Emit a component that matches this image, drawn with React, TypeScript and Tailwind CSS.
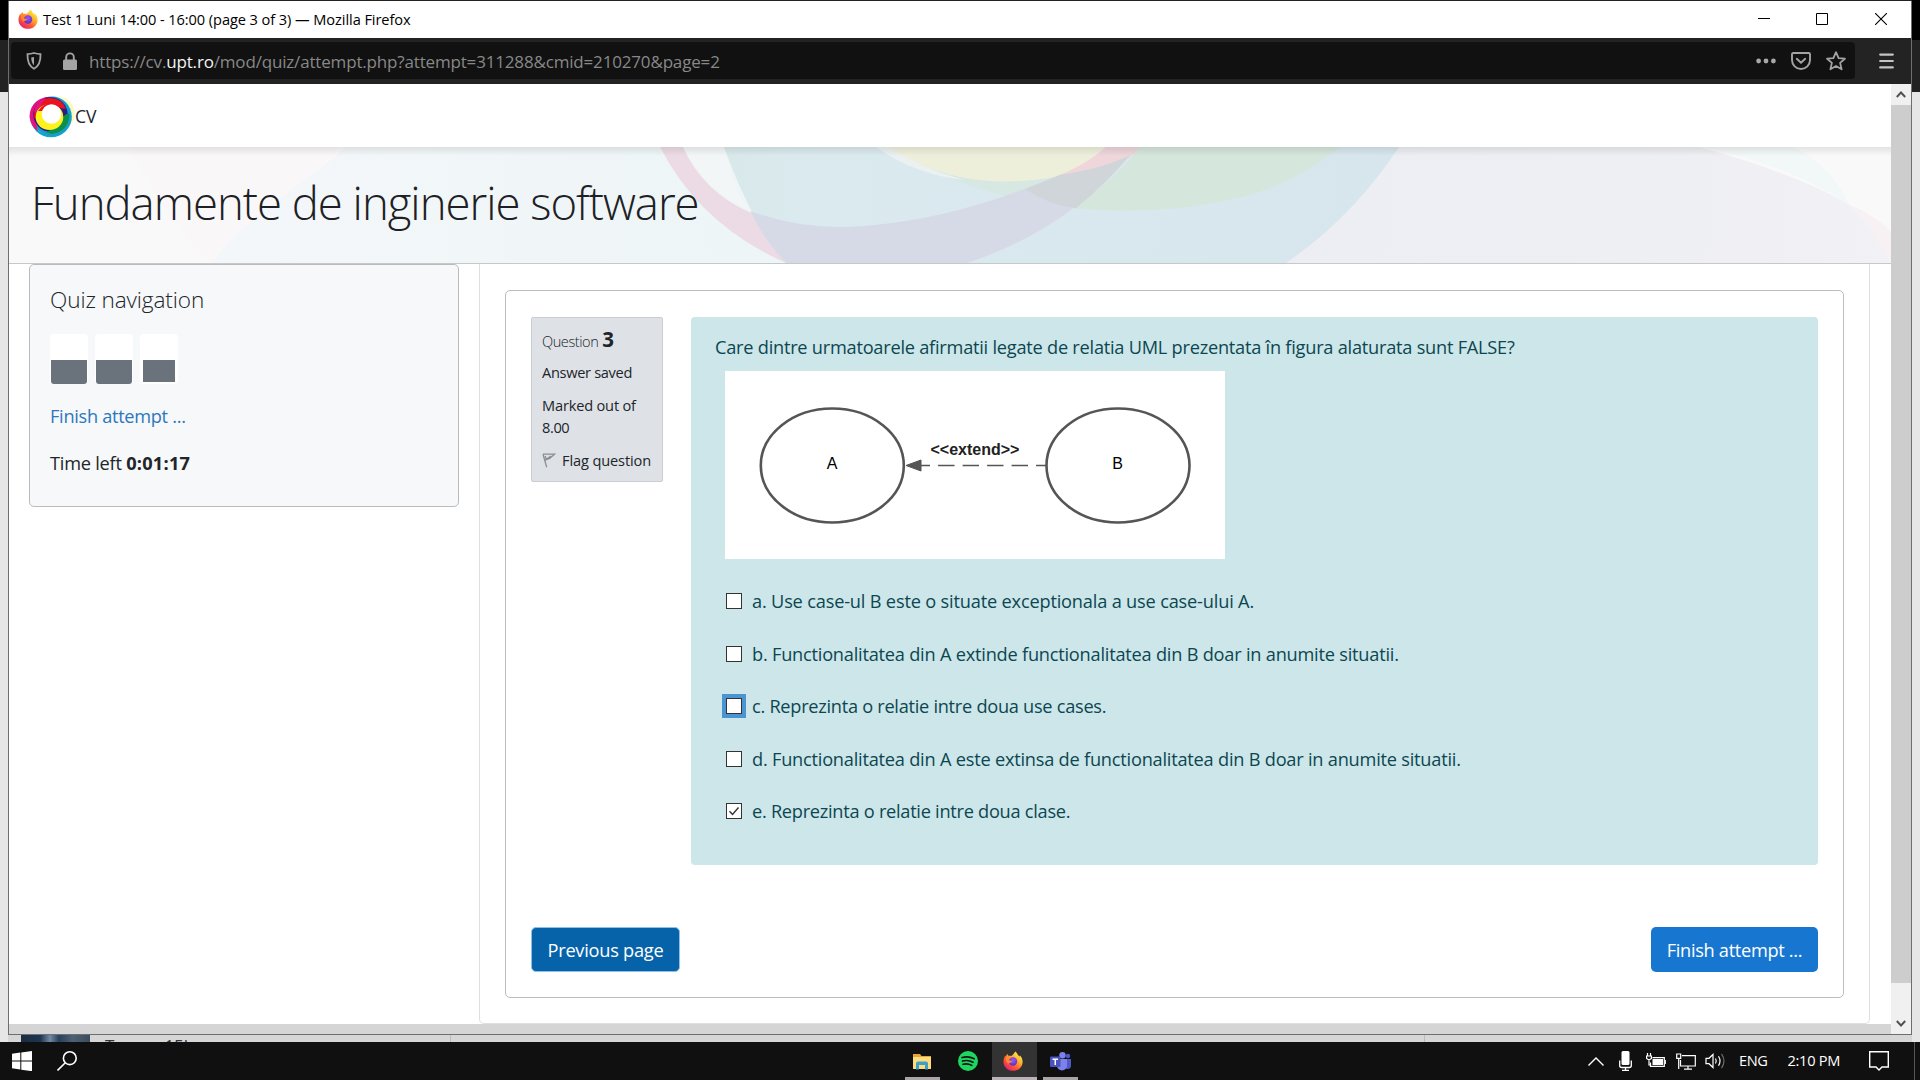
import type { ReactNode } from "react";

const options: { text: string; tracking: string; checked?: boolean; focused?: boolean }[] = [
  { text: "a. Use case-ul B este o situate exceptionala a use case-ului A.", tracking: "tracking-[-0.182px]" },
  { text: "b. Functionalitatea din A extinde functionalitatea din B doar in anumite situatii.", tracking: "tracking-[-0.22px]" },
  { text: "c. Reprezinta o relatie intre doua use cases.", tracking: "tracking-[-0.275px]", focused: true },
  { text: "d. Functionalitatea din A este extinsa de functionalitatea din B doar in anumite situatii.", tracking: "tracking-[-0.22px]" },
  { text: "e. Reprezinta o relatie intre doua clase.", tracking: "tracking-[-0.268px]", checked: true },
];

function FirefoxIcon() {
  return (
    <svg viewBox="0 0 20 20" className="size-5 shrink-0">
      <defs>
        <linearGradient id="fxBody" x1="0.85" y1="0.1" x2="0.2" y2="0.95">
          <stop offset="0" stopColor="#fff04a" />
          <stop offset="0.35" stopColor="#ffae2b" />
          <stop offset="0.65" stopColor="#ff5a37" />
          <stop offset="1" stopColor="#e3206f" />
        </linearGradient>
        <radialGradient id="fxCore" cx="0.5" cy="0.35" r="0.7">
          <stop offset="0" stopColor="#9a59ff" />
          <stop offset="1" stopColor="#5a2bb5" />
        </radialGradient>
      </defs>
      <path
        d="M12.3.4c1.600 1.300 2.300 2.600 2.700 3.900.7.200 1.200.8 1.500 1.500.3-.5.4-1 .4-1.500 1.700 1.700 2.700 4.200 2.700 6.600 0 5-4.200 8.900-9.500 8.900S.5 16 .5 10.900c0-2.300.6-4.600 1.900-6.300.1 0 .2.700.3 1.100.4-1.100 1.200-2 2.200-2.600 0 .7.200 1.300.6 1.800 1-.2 2 0 3 .2 1.300-1.500 2.700-2.900 3.800-4.700Z"
        fill="url(#fxBody)"
      />
      <circle cx="10" cy="10.500" r="4.200" fill="url(#fxCore)" />
      <path d="M3 6.500c1.800-1.200 4-1.200 5.600.2-1 .3-1.300.8-2.600 1.400-.6.400 0 1.200.6 1.400.9.300 2.200.2 2.700.8-.8 1.800-3.300 1.300-4 2.500C3.600 11.400 2.600 9 3 6.500Z" fill="#ff8a2a" />
    </svg>
  );
}

function TitleBar() {
  return (
    <div className="flex h-[37px] shrink-0 items-center bg-white pb-[2px] pl-[9px] text-black">
      <FirefoxIcon />
      <span className="ml-[5px] text-[14.6px] leading-[20px] tracking-[-0.076px]">
        Test 1 Luni 14:00 - 16:00 (page 3 of 3) — Mozilla Firefox
      </span>
      <div className="ml-auto flex items-center pr-[24px]">
        <svg viewBox="0 0 12 12" className="mr-[46px] size-3"><path d="M0 5.500h12" stroke="#000" /></svg>
        <svg viewBox="0 0 12 12" className="mr-[47px] size-3"><path d="M.5.5h11v11H.5Z" fill="none" stroke="#000" /></svg>
        <svg viewBox="0 0 12 12" className="size-3"><path d="M0 0l12 12M12 0L0 12" stroke="#000" strokeWidth="1.100" /></svg>
      </div>
    </div>
  );
}

function Toolbar() {
  return (
    <div className="flex h-[46px] shrink-0 items-start bg-[#232323] pl-[2px] pt-[4px]">
      <div className="flex h-[37px] w-[1844px] items-center rounded-sm bg-[#111111] pl-[15px]">
        <svg viewBox="0 0 16 18" className="h-[18px] w-4 shrink-0" fill="none" stroke="#a3a3a3" strokeWidth="1.800">
          <path d="M8 1c2.200.7 4.400 1.100 6.500 1.200.2 5.500-.6 11.300-6.500 14.600C2.100 13.500 1.300 7.700 1.500 2.200 3.600 2.100 5.800 1.700 8 1Z" />
          <path d="M8 5v8.200C6.300 11.800 5.300 9 5.200 5.500 6.200 5.400 7.200 5.300 8 5Z" fill="#a3a3a3" stroke="none" />
        </svg>
        <svg viewBox="0 0 16 18" className="ml-[20px] h-[18px] w-4 shrink-0">
          <path d="M4.200 8V5.200a3.800 3.800 0 0 1 7.600 0V8" fill="none" stroke="#a3a3a3" strokeWidth="1.900" />
          <rect x="1" y="7.500" width="14" height="10.500" rx="1.500" fill="#a3a3a3" />
        </svg>
        <span className="ml-[11px] whitespace-pre pt-[2px] text-[17px] leading-[24px] tracking-[-0.17px] text-[#888888]">
          https://cv.<span className="text-[#f4f4f4]">upt.ro</span>/mod/quiz/attempt.php?attempt=311288&amp;cmid=210270&amp;page=2
        </span>
        <div className="ml-auto flex items-center pr-[9px]">
          <svg viewBox="0 0 20 6" className="mr-[15px] h-[6px] w-5" fill="#a8a8a8">
            <circle cx="2.600" cy="3" r="2.400" /><circle cx="10" cy="3" r="2.400" /><circle cx="17.400" cy="3" r="2.400" />
          </svg>
          <svg viewBox="0 0 20 18" className="mr-[15px] h-[18px] w-5" fill="none" stroke="#a3a3a3" strokeWidth="1.900" strokeLinecap="round" strokeLinejoin="round">
            <path d="M2.200 1h15.600c.8 0 1.200.5 1.200 1.200V8a9 9 0 0 1-18 0V2.200C1 1.500 1.400 1 2.200 1Z" />
            <path d="M5.800 6.800L10 10.800l4.200-4" />
          </svg>
          <svg viewBox="0 0 20 20" className="size-5" fill="none" stroke="#a3a3a3" strokeWidth="1.800" strokeLinejoin="round">
            <path d="M10 1.200l2.600 5.900 6.300.6-4.800 4.200 1.500 6.400L10 14.900l-5.600 3.400 1.500-6.400L1.100 7.700l6.300-.6Z" />
          </svg>
        </div>
      </div>
      <svg viewBox="0 0 15 16" className="ml-[24px] mt-[11px] h-4 w-[15px]" stroke="#c4c4c4" strokeWidth="2.200" strokeLinecap="round">
        <path d="M1.200 1.600h12.600M1.200 8h12.600M1.200 14.400h12.600" />
      </svg>
    </div>
  );
}

function SiteLogo() {
  return (
    <svg viewBox="28 92 48 46" className="h-[46px] w-12 shrink-0">
      <circle cx="57" cy="112.500" r="17.500" fill="#fdf9b4" />
      <circle cx="51" cy="115.500" r="20.800" fill="#12a3cf" />
      <circle cx="51.500" cy="114" r="20" fill="#fff" />
      <circle cx="52" cy="115.200" r="19.600" fill="#149fc9" />
      <path d="M46 96Q30 100 29.500 116Q31 126 38 130Q34 118 38 108Q42 100 52 96Z" fill="#e6127f" />
      <circle cx="50.500" cy="113.500" r="17.200" fill="#2a1d86" />
      <path d="M52 133Q69 130 69.500 113Q65 111 60 121Q55 128 46 131Z" fill="#0b8f4b" />
      <path d="M34 116Q34 98 50 97Q62 97 66 108L52 104L38 122Z" fill="#e8141f" />
      <path d="M34 110Q36 99 46 97Q40 103 37 114Z" fill="#e6127f" />
      <ellipse cx="49.500" cy="116" rx="13.800" ry="13" fill="#fdf21c" />
      <path d="M38 110Q44 101 54 101.500Q61 102 64 108L54 105L42 110Z" fill="#e8141f" />
      <circle cx="51.500" cy="113" r="9.800" fill="#fff" />
    </svg>
  );
}

function BannerArt() {
  return (
    <svg viewBox="9 147 1882 116" preserveAspectRatio="none" className="absolute inset-0 size-full">
      <defs>
        <linearGradient id="topShade" x1="0" y1="0" x2="0" y2="1">
          <stop offset="0" stopColor="#000" stopOpacity="0.09" />
          <stop offset="1" stopColor="#000" stopOpacity="0" />
        </linearGradient>
        <linearGradient id="leftTint" x1="0" y1="0" x2="1" y2="0">
          <stop offset="0" stopColor="#f4f7f9" />
          <stop offset="1" stopColor="#edf5f6" />
        </linearGradient>
        <linearGradient id="rightTint" x1="0" y1="0" x2="1" y2="0">
          <stop offset="0" stopColor="#edeef3" />
          <stop offset="0.6" stopColor="#eeeff3" />
          <stop offset="1" stopColor="#f2f1f5" />
        </linearGradient>
        <linearGradient id="teal" x1="0" y1="0" x2="1" y2="0">
          <stop offset="0" stopColor="#d9e9ea" />
          <stop offset="0.15" stopColor="#dbeaef" />
          <stop offset="1" stopColor="#d7e5ed" />
        </linearGradient>
      </defs>
      <rect x="9" y="147" width="1882" height="116" fill="#f9f9fa" />
      <path d="M130 147C150 190 175 230 212 263H240L300 190L340 147Z" fill="#faf7f9" />
      <path d="M345 147C318 175 245 215 212 263H800V147Z" fill="url(#leftTint)" />
      <path d="M683 147H724Q732 185 749 210Q705 190 683 147Z" fill="#f3f6f7" />
      <path d="M1380 147H1700Q1800 175 1850 205Q1875 230 1891 263H1270Z" fill="url(#rightTint)" />
      <path d="M1700 147H1794Q1830 165 1850 205Q1790 165 1700 147Z" fill="#f2f7f8" />
      <path d="M1850 205Q1875 215 1891 232V263Q1875 230 1850 205Z" fill="#f7f1f3" />
      <path d="M724 147H1399Q1352 218 1286 263H786Q750 220 724 147Z" fill="url(#teal)" />
      <path d="M876 147H890Q950 175 1010 181L1060 176L1008 197Q945 180 876 147Z" fill="#d7e8e2" />
      <path d="M876 147H892Q920 168 965 180Q915 175 876 147Z" fill="#eaf1f0" />
      <path d="M888 147H1106Q1090 165 1059 176Q985 190 930 168Q905 158 888 147Z" fill="#eeefdb" />
      <path d="M1140 147H1340Q1300 180 1250 195Q1165 217 1070 208Q1110 185 1140 147Z" fill="#d5e6dc" />
      <path d="M660 147H683Q703 192 751 213Q762 235 786 263Q700 225 660 147Z" fill="#ecdbe4" />
      <path d="M750 211Q796 228 845 227Q922 224 1002 197L1060 176Q1095 172 1128 158Q1062 232 967 263H786Q764 240 750 211Z" fill="#d6dae6" />
      <path d="M1106 147H1140Q1132 159 1112 165Q1080 178 1052 178Q1085 166 1106 147Z" fill="#eed6db" />
      <path d="M1025 189L1060 175Q1105 168 1130 155Q1105 185 1076 208Q1048 205 1025 189Z" fill="#cfd5d9" />
      <rect x="9" y="147" width="1882" height="9" fill="url(#topShade)" />
    </svg>
  );
}

function NavSquare({ children }: { children: ReactNode }) {
  return <div className="flex h-[50px] w-[38px] flex-col items-center justify-end rounded-[4px] bg-white">{children}</div>;
}

function QuizNavigation() {
  return (
    <aside className="flex h-[243px] w-[430px] flex-col items-start rounded-[5px] border border-[#b9bbbe] bg-[#f6f8fa] pl-5 text-[#212529]">
      <h2 className="mt-[19px] text-[22.6px] font-light leading-[32px] tracking-[-0.11px]">Quiz navigation</h2>
      <div className="mt-[18px] flex gap-[7px]">
        <NavSquare><div className="h-6 w-9 rounded-b-[3px] bg-[#6a737b]" /></NavSquare>
        <NavSquare><div className="h-6 w-9 rounded-b-[3px] bg-[#6a737b]" /></NavSquare>
        <NavSquare><div className="mb-[2px] h-[22px] w-8 bg-[#6a737b]" /></NavSquare>
      </div>
      <a className="mt-[18px] text-[18.2px] leading-[28px] tracking-[-0.3px] text-[#2c77bd]">Finish attempt ...</a>
      <p className="mt-[19px] text-[18.2px] leading-[28px] tracking-[-0.24px]">
        Time left <span className="font-bold tracking-[0.25px]">0:01:17</span>
      </p>
    </aside>
  );
}

function QuestionInfo() {
  return (
    <div className="flex h-[165px] w-[132px] flex-col items-start rounded-[2px] border border-[#c9cdd2] bg-[#dee2e6] pl-[10px] text-[14.6px] leading-[22px] text-[#212529]">
      <div className="mt-[9px] flex h-[24px] items-baseline">
        <span className="text-[14.6px] font-light tracking-[-0.45px]">Question</span>
        <span className="ml-[4px] text-[20.500px] font-bold leading-[24px]">3</span>
      </div>
      <div className="mt-[10px] tracking-[-0.32px]">Answer saved</div>
      <div className="mt-[11px] tracking-[-0.18px]">Marked out of</div>
      <div className="tracking-[-0.4px]">8.00</div>
      <div className="mt-[11px] flex items-center whitespace-nowrap tracking-[-0.13px]">
        <svg viewBox="0 0 14 15" className="mr-[6px] h-[15px] w-[14px]" fill="none" stroke="#8b8f93" strokeWidth="1.300">
          <path d="M1 1.200h11.500L8 5.200 2.700 7.300M1 1.200l3.700 13M3.200 3l1 3.200L9 3" />
        </svg>
        Flag question
      </div>
    </div>
  );
}

function UmlDiagram() {
  return (
    <svg viewBox="725 371 500 188" className="ml-[10px] h-[188px] w-[500px] bg-white" fontFamily="Liberation Sans, sans-serif">
      <g fill="none" stroke="#555" strokeWidth="2.600">
        <ellipse cx="832.300" cy="465.500" rx="71.500" ry="57" />
        <ellipse cx="1118" cy="465.500" rx="71.500" ry="57" />
      </g>
      <path d="M921 465.500H1046" stroke="#555" strokeWidth="1.500" strokeDasharray="16.400 8.100" strokeDashoffset="7.400" />
      <path d="M906 465.500l15-5.500v11Z" fill="#555" stroke="#555" />
      <text x="832" y="468.500" fontSize="16" textAnchor="middle">A</text>
      <text x="1117.500" y="468.500" fontSize="16" textAnchor="middle">B</text>
      <text x="975" y="454.500" fontSize="16" fontWeight="700" textAnchor="middle" fill="#222">&lt;&lt;extend&gt;&gt;</text>
    </svg>
  );
}

function Checkbox({ checked, focused }: { checked?: boolean; focused?: boolean }) {
  return (
    <div className={focused ? "bg-[#4a94d2] p-1" : "p-1"}>
      <div className="size-4 border border-[#333] bg-white">
        {checked && (
          <svg viewBox="0 0 14 14" className="size-3.5"><path d="M2.500 7.300L5.500 10.500 11.500 3.500" fill="none" stroke="#333" strokeWidth="1.400" /></svg>
        )}
      </div>
    </div>
  );
}

function Formulation() {
  return (
    <div className="ml-7 h-[548px] w-[1127px] rounded-[4px] bg-[#cce6ea] pl-6 text-[18.2px] text-[#0c4650]">
      <p className="pt-[16px] leading-[28px] tracking-[-0.236px]">
        Care dintre urmatoarele afirmatii legate de relatia UML prezentata în figura alaturata sunt FALSE?
      </p>
      <div className="mt-[10px]"><UmlDiagram /></div>
      <div className="mt-[16px] flex flex-col">
        {options.map((o) => (
          <div key={o.text} className="flex h-[52.5px] items-center pl-[7px]">
            <Checkbox checked={o.checked} focused={o.focused} />
            <span className={`ml-[6px] whitespace-nowrap leading-[28px] ${o.tracking}`}>{o.text}</span>
          </div>
        ))}
      </div>
    </div>
  );
}

function Page() {
  return (
    <div className="flex w-[1882px] flex-col bg-white">
      <header className="flex h-[63px] shrink-0 items-center bg-white pl-[19px]">
        <SiteLogo />
        <span className="-ml-px text-[17.600px] leading-[24px] text-[#212529]">CV</span>
      </header>
      <div className="relative h-[117px] shrink-0 border-b border-[#c6c8ca]">
        <BannerArt />
        <h1 className="relative pl-[22px] pt-[23px] text-[45.500px] font-light leading-[64px] tracking-[-1.01px] text-[#1d2125]">
          Fundamente de inginerie software
        </h1>
      </div>
      <div className="flex h-[760px] items-start pl-5">
        <QuizNavigation />
        <main className="ml-5 h-[760px] w-[1391px] rounded-b-[5px] border border-t-0 border-[#dfdfdf] pl-[25px] pt-[26px]">
          <div className="h-[708px] w-[1339px] rounded-[5px] border border-[#bdbdbd] bg-white pl-[25px] pt-[26px]">
            <div className="flex items-start">
              <QuestionInfo />
              <Formulation />
            </div>
            <div className="mt-[62px] flex w-[1287px] items-center justify-between text-[18.2px] text-white">
              <button className="h-[45px] w-[149px] rounded-[5px] border border-[#8fc0ea] bg-[#0763a9] pt-[2px] tracking-[-0.236px]">Previous page</button>
              <button className="h-[45px] w-[167px] rounded-[5px] bg-[#1777d0] pt-[2px] tracking-[-0.31px]">Finish attempt ...</button>
            </div>
          </div>
        </main>
      </div>
    </div>
  );
}

function VerticalScrollbar() {
  return (
    <div className="flex w-5 flex-col bg-[#f0f0f0]">
      <div className="flex h-[21px] items-center justify-center">
        <svg viewBox="0 0 10 7" className="h-[7px] w-[10px]" fill="none" stroke="#505050" strokeWidth="1.900"><path d="M.8 6L5 1.500 9.200 6" /></svg>
      </div>
      <div className="h-[878px] bg-[#cdcdcd]" />
      <div className="flex flex-1 items-end justify-center pb-[7px]">
        <svg viewBox="0 0 10 7" className="h-[7px] w-[10px]" fill="none" stroke="#505050" strokeWidth="1.900"><path d="M.8 1L5 5.500 9.200 1" /></svg>
      </div>
    </div>
  );
}

function BrowserWindow() {
  return (
    <div className="mt-px flex h-[1034px] w-[1904px] flex-col border-b border-l border-r border-[#6e6e6e] bg-white">
      <TitleBar />
      <Toolbar />
      <div className="flex h-[950px] shrink-0 overflow-hidden">
        <div className="flex flex-col">
          <Page />
          <div className="h-[10px] w-[1882px] bg-[#d5d5d5]" />
        </div>
        <VerticalScrollbar />
      </div>
    </div>
  );
}

function BackdropEdge() {
  return (
    <div className="flex h-[1042px] flex-1 flex-col">
      <div className="h-10 bg-black" />
      <div className="h-[52px] bg-[#222222]" />
      <div className="flex-1 bg-[#e6e6e6]" />
    </div>
  );
}

function BackdropStrip() {
  return (
    <div className="flex h-[7px] items-start overflow-hidden bg-[#d6d6d6] text-[17px] leading-[20px] text-[#333]">
      <div className="ml-[13px] h-[7px] w-[69px] bg-[linear-gradient(90deg,#1b2c44_0%,#1f3450_28%,#6f8aa3_42%,#27405c_55%,#4d6175_75%,#3b4c5c_100%)]" />
      <span className="ml-[15px] mt-px">T</span>
      <span className="ml-[50px] mt-px">15l</span>
      <div className="ml-[262px] h-[7px] w-px bg-[#bcbcbc]" />
      <div className="ml-[973px] h-[7px] w-px bg-[#bcbcbc]" />
    </div>
  );
}

function TaskItem({ children, active, open = true }: { children: ReactNode; active?: boolean; open?: boolean }) {
  return (
    <div className={active ? "flex h-[38px] w-[45px] flex-col bg-[#333333]" : "flex h-[38px] w-[35px] flex-col"}>
      <div className={active ? "flex h-[35px] items-center justify-center pr-[3px] pt-[2px]" : "flex h-[35px] items-center justify-center pr-px pt-[3px]"}>{children}</div>
      {open && <div className={active ? "h-[3px] bg-[#b9b3b9]" : "h-[3px] bg-[#a8a4a8]"} />}
    </div>
  );
}

function Taskbar() {
  return (
    <div className="flex h-[38px] items-center bg-[#101010] text-white">
      <svg viewBox="0 0 20 20" className="ml-3 size-5 shrink-0" fill="#fff">
        <path d="M0 2.800L8.300 1.600V9.600H0ZM9.300 1.500L20 0V9.600H9.300ZM0 10.600H8.300V18.500L0 17.300ZM9.300 10.600H20V20.200L9.300 18.700Z" />
      </svg>
      <svg viewBox="0 0 20 20" className="ml-[25px] size-5 shrink-0" fill="none" stroke="#fff" strokeWidth="1.600">
        <circle cx="12.800" cy="7.200" r="6.400" /><path d="M8.300 11.700L.5 19.500" />
      </svg>
      <div className="ml-[828px] flex">
        <TaskItem>
          <svg viewBox="0 0 18 17" className="h-[17px] w-[18px]">
            <path d="M0 1h7l1.500 2H18v13H0Z" fill="#e8a33a" />
            <path d="M0 4h18v12H0Z" fill="#fbdc7f" />
            <path d="M3 16.500V10.500Q3 8.500 5 8.500H13Q15 8.500 15 10.500V16.500H12V12H6V16.500Z" fill="#3f9fc4" />
          </svg>
        </TaskItem>
        <div className="ml-[11px]">
          <TaskItem open={false}>
            <svg viewBox="0 0 20 20" className="size-5">
              <circle cx="10" cy="10" r="10" fill="#1ed760" />
              <path d="M4 6.600c4-1.200 8.500-.8 12.200 1.200M4.500 10.100c3.500-1 7.300-.6 10.500 1.200M5 13.300c3-.8 6-.5 8.800 1.100" fill="none" stroke="#101010" strokeWidth="1.600" strokeLinecap="round" />
            </svg>
          </TaskItem>
        </div>
        <div className="ml-[6px]"><TaskItem active><FirefoxIcon /></TaskItem></div>
        <div className="ml-[6px]">
          <TaskItem>
            <svg viewBox="0 0 21 19" className="h-[19px] w-[21px]">
              <circle cx="12.500" cy="3.200" r="3.200" fill="#7b83eb" />
              <circle cx="18" cy="4" r="2.200" fill="#5059c9" />
              <path d="M14 7h7v6a3.500 3.500 0 0 1-7 1Z" fill="#5059c9" />
              <path d="M7 7h10v6.500a5 5 0 0 1-10 0Z" fill="#7b83eb" />
              <rect y="4.500" width="10.500" height="10.500" rx="1" fill="#4b53bc" />
              <path d="M2.500 7.200h5.500M5.250 7.200v5.800" stroke="#fff" strokeWidth="1.500" />
            </svg>
          </TaskItem>
        </div>
      </div>
      <div className="ml-auto flex items-center text-[14.600px]">
        <svg viewBox="0 0 16 9" className="h-[9px] w-4" fill="none" stroke="#fff" strokeWidth="1.400"><path d="M.5 8.500L8 1l7.500 7.500" /></svg>
        <svg viewBox="0 0 13 20" className="ml-[15px] h-5 w-[13px]" fill="none" stroke="#fff" strokeWidth="1.300">
          <rect x="2.500" y="0" width="8" height="14" rx="1.500" fill="#fff" stroke="none" />
          <path d="M.7 9.500v5q0 2 2 2h7.600q2 0 2-2v-5M6.500 16.500v3M3 19.300h7" />
        </svg>
        <svg viewBox="0 0 20 16" className="ml-[14px] h-4 w-5" fill="none" stroke="#fff" strokeWidth="1.200">
          <path d="M6.500 4.600H18.300V13.400H4.500V9.500" /><rect x="6.500" y="6" width="10.500" height="6" fill="#fff" stroke="none" /><path d="M19.300 7v4" />
          <path d="M1.500 0v3M4.500 0v3M.6 3h4.800v2.500L3 7 .6 5.500ZM3 7v5h2" />
        </svg>
        <svg viewBox="0 0 20 17" className="ml-[10px] h-[17px] w-5" fill="none" stroke="#fff" strokeWidth="1.200">
          <path d="M6 2.600H19.300V13H4.500V7M12 13v3M8 16.200h8" /><path d="M.7 1h4v4.300h-4ZM2.700 5.300V16" />
        </svg>
        <svg viewBox="0 0 21 18" className="ml-[9px] h-[18px] w-[21px]" fill="none" stroke="#fff" strokeWidth="1.200">
          <path d="M1 6.300h3L8 2.500v13L4 11.700H1Z" /><path d="M10.500 6.500q1.500 2.500 0 5M13.500 4.300q3 4.700 0 9.400" /><path d="M16.500 1.800q5 7.200 0 14.400" stroke="#6a6a6a" />
        </svg>
        <span className="ml-[13px] tracking-[-0.4px]">ENG</span>
        <span className="ml-[20px] tracking-[-0.3px]">2:10 PM</span>
        <svg viewBox="0 0 20 20" className="ml-[29px] size-5" fill="none" stroke="#fff" strokeWidth="1.400"><path d="M.7.700H19.300V16H13L10 19 7 16H.7Z" /></svg>
        <div className="ml-[25px] h-[38px] w-px bg-[#555]" />
        <div className="w-[5px]" />
      </div>
    </div>
  );
}

export default function App() {
  return (
    <div className="flex h-[1080px] w-[1920px] flex-col overflow-hidden bg-[#101010] font-['Open_Sans',sans-serif]">
      <div className="flex h-[1042px] shrink-0">
        <div className="flex w-2"><BackdropEdge /></div>
        <div className="flex w-[1904px] flex-col bg-[#222222]">
          <BrowserWindow />
          <BackdropStrip />
        </div>
        <div className="flex w-2"><BackdropEdge /></div>
      </div>
      <Taskbar />
    </div>
  );
}
